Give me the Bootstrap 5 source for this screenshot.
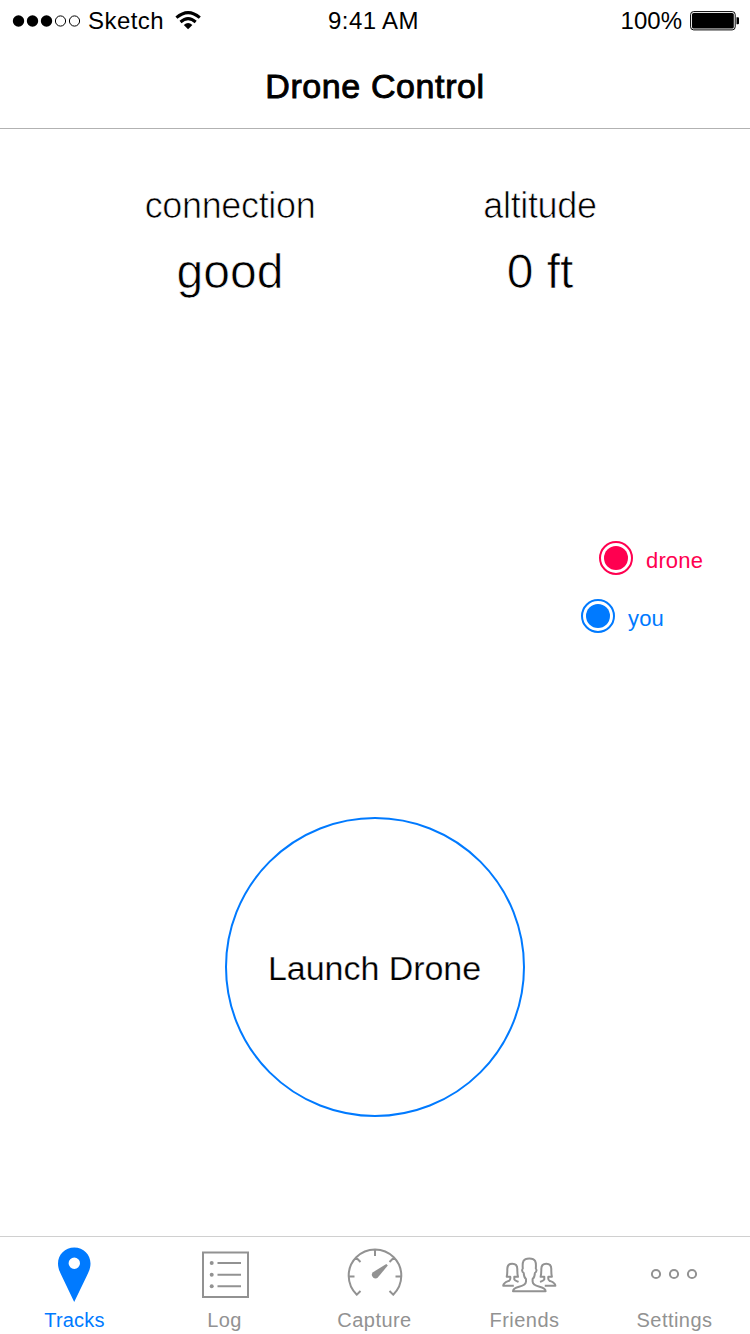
<!DOCTYPE html>
<html lang="en">
<head>
<meta charset="utf-8">
<meta name="viewport" content="width=device-width, initial-scale=1">
<title>Drone Control</title>
<link href="https://cdn.jsdelivr.net/npm/bootstrap@5.3.0/dist/css/bootstrap.min.css" rel="stylesheet">
<style>
  :root { --ios-blue: #007aff; --ios-pink: #ff0050; --ios-gray: #929292; }
  body { font-family: "Liberation Sans", Arial, sans-serif; color: #000; background: #fff; }
  svg { display: block; flex: none; overflow: visible; }
  .screen { width: 750px; height: 1334px; overflow: hidden; }
  .status-bar { height: 41px; font-size: 24px; line-height: 41px; padding: 0 11px 0 12px; }
  .status-bar > div { flex: 1 1 0; }
  .carrier { letter-spacing: .45px; margin: 0 11px 0 7px; }
  .clock { letter-spacing: .4px; padding-right: 4px; }
  .title-bar { height: 88px; border-bottom: 1px solid #b2b2b2; padding-top: 3px; }
  .title-bar h1 { font-size: 34px; line-height: 40px; font-weight: 400; letter-spacing: .6px; -webkit-text-stroke: .9px #000; }
  .readouts { padding: 50px 55px 0 75px; }
  .readout { width: 310px; white-space: nowrap; -webkit-text-stroke: .7px #fff; }
  .readout-label { font-size: 36px; line-height: 54px; letter-spacing: -.35px; }
  .readout-value { font-size: 48px; line-height: 78px; }
  .legend { height: 116px; margin-top: 218px; }
  .legend-item { height: 58px; font-size: 22px; line-height: 24px; gap: 12px; letter-spacing: .15px; }
  .legend-item span { padding-top: 5px; }
  .launch { width: 300px; height: 300px; margin-top: 172px; border: 2px solid var(--ios-blue); font-size: 34px; line-height: 40px; background: none; color: #000; padding: 1px 1px 0 0; letter-spacing: -.05px; white-space: nowrap; -webkit-text-stroke: .25px #fff; }
  .tabs { height: 98px; border-top: 1px solid #d0d0d0; }
  .tab { color: var(--ios-gray); font-size: 20px; line-height: 24px; letter-spacing: .45px; text-decoration: none; }
  .tab svg { height: 70px; margin-top: 1px; }
  .tab span { padding-right: 1px; }
  .tab.current { color: var(--ios-blue); letter-spacing: .2px; }
</style>
</head>
<body>
<div class="screen d-flex flex-column">
  <div class="status-bar d-flex align-items-center">
    <div class="d-flex align-items-center">
      <svg width="69" height="14" viewBox="0 0 69 14"><g fill="#000"><circle cx="6.500" cy="7" r="5.700"/><circle cx="20.500" cy="7" r="5.700"/><circle cx="34.500" cy="7" r="5.700"/></g><g fill="none" stroke="#000"><circle cx="48.500" cy="7" r="5.100"/><circle cx="62.500" cy="7" r="5.100"/></g></svg>
      <span class="carrier">Sketch</span>
      <svg width="27" height="19" viewBox="0 0 27 19"><g fill="none" stroke="#000" stroke-width="3"><path d="M1.400 6.700Q13.100-3.500 24.800 6.700"/><path d="M5.500 11Q13.100 4.300 20.700 11"/></g><path d="M8.800 14Q13.100 10.200 17.400 14L13.100 18.200Z"/></svg>
    </div>
    <div class="clock text-center">9:41 AM</div>
    <div class="d-flex align-items-center justify-content-end">
      <span>100%</span>
      <svg width="49" height="20" viewBox="0 0 49 20" style="margin-left:8px"><rect x=".6" y=".6" width="44.600" height="18.300" rx="3" fill="none" stroke="#000"/><rect x="2" y="2" width="41.800" height="15.500" rx="1.600"/><path d="M46.500 6.300H48Q49 6.300 49 7.300V12.300Q49 13.300 48 13.300H46.500Z"/></svg>
    </div>
  </div>
  <header class="title-bar d-flex align-items-center justify-content-center"><h1 class="m-0">Drone Control</h1></header>
  <section class="readouts d-flex justify-content-between">
    <div class="readout text-center"><div class="readout-label">connection</div><div class="readout-value">good</div></div>
    <div class="readout text-center"><div class="readout-label">altitude</div><div class="readout-value">0 ft</div></div>
  </section>
  <section class="legend">
    <div class="legend-item d-flex align-items-center" style="margin-left:599px;color:var(--ios-pink)">
      <svg width="35" height="34" viewBox="0 0 35 34"><circle cx="17" cy="17" r="16" fill="none" stroke="currentColor" stroke-width="2"/><circle cx="17" cy="17" r="12" fill="currentColor"/></svg><span>drone</span>
    </div>
    <div class="legend-item d-flex align-items-center" style="margin-left:581px;color:var(--ios-blue)">
      <svg width="35" height="34" viewBox="0 0 35 34"><circle cx="17" cy="17" r="16" fill="none" stroke="currentColor" stroke-width="2"/><circle cx="17" cy="17" r="12" fill="currentColor"/></svg><span>you</span>
    </div>
  </section>
  <button class="launch rounded-circle align-self-center" type="button">Launch Drone</button>
  <nav class="tabs d-flex mt-auto">
    <a class="tab current d-flex flex-column align-items-center flex-fill" style="width:20%"><svg width="60" viewBox="0 0 60 70"><path fill="currentColor" fill-rule="evenodd" d="M29.300 9.500C20 9.500 13 16.700 13 25.500C13 30 14.500 33.500 17 38.500L29.200 64L41.500 38.500C44 33.500 45.500 30 45.500 25.500C45.500 16.700 38.500 9.500 29.300 9.500ZM29.300 19.500A5.700 5.700 0 1 0 29.300 30.900A5.700 5.700 0 1 0 29.300 19.500Z"/></svg><span>Tracks</span></a>
    <a class="tab d-flex flex-column align-items-center flex-fill" style="width:20%"><svg width="60" viewBox="0 0 60 70"><g fill="none" stroke="currentColor" stroke-width="2"><path d="M8 14.500H53V59H8ZM22.500 25H46M22.500 36.700H46M22.500 48.300H46"/></g><g fill="currentColor"><circle cx="16.700" cy="25" r="2"/><circle cx="16.700" cy="36.700" r="2"/><circle cx="16.700" cy="48.300" r="2"/></g></svg><span>Log</span></a>
    <a class="tab d-flex flex-column align-items-center flex-fill" style="width:20%"><svg width="60" viewBox="0 0 60 70"><path fill="none" stroke="currentColor" stroke-width="2" d="M15.500 53L11.800 56.700A26.300 26.300 0 1 1 48.200 56.700L44.500 53M30 12V18M3.700 38.500H9.500M50.500 38.500H56.300M11.500 20L15.500 24M48.500 20L44.500 24"/><path fill="currentColor" d="M42.800 27.600L41.300 26L28 34.200A3.500 3.500 0 1 0 33 39.200Z"/></svg><span>Capture</span></a>
    <a class="tab d-flex flex-column align-items-center flex-fill" style="width:20%">
      <svg width="60" viewBox="0 0 60 70"><g fill="none" stroke="currentColor" stroke-width="2" stroke-linejoin="round">
        <path d="M18 53.300C18 50.500 20.500 49.600 24 48.700C28 47.700 31 46.500 31 43.500V41C29 39.500 28.800 37 28.700 35C26.500 33.500 27 31.500 27.800 30.500C27.200 24 28 20.500 34.300 20.500C40.600 20.500 41.400 24 40.800 30.500C41.600 31.500 42.100 33.500 39.900 35C39.800 37 39.600 39.500 37.600 41V43.500C37.600 46.500 40.600 47.700 44.600 48.700C48.100 49.600 50.600 50.500 50.600 53.300Z"/>
        <path id="side-friend" d="M18.800 47.700H8.200C8.400 44.500 11.500 43.800 14.200 42.700C15.500 42 15.500 40.500 15.300 38.800H11.700C12.500 36 12.300 33 12.300 31C12.300 27.500 14 25.700 17.300 25.700C20.600 25.700 22.300 27.500 22.300 31C22.300 33 22.200 36 23 38.800H19.300V41.300C19.800 42.500 21.500 43 23.500 44"/>
        <use href="#side-friend" transform="matrix(-1 0 0 1 68.600 0)"/>
      </g></svg><span>Friends</span></a>
    <a class="tab d-flex flex-column align-items-center flex-fill" style="width:20%"><svg width="60" viewBox="0 0 60 70"><g fill="none" stroke="currentColor" stroke-width="2"><circle cx="11" cy="36" r="4.100"/><circle cx="29" cy="36" r="4.100"/><circle cx="47" cy="36" r="4.100"/></g></svg><span>Settings</span></a>
  </nav>
</div>
<script src="https://cdn.jsdelivr.net/npm/bootstrap@5.3.0/dist/js/bootstrap.bundle.min.js"></script>
</body>
</html>
